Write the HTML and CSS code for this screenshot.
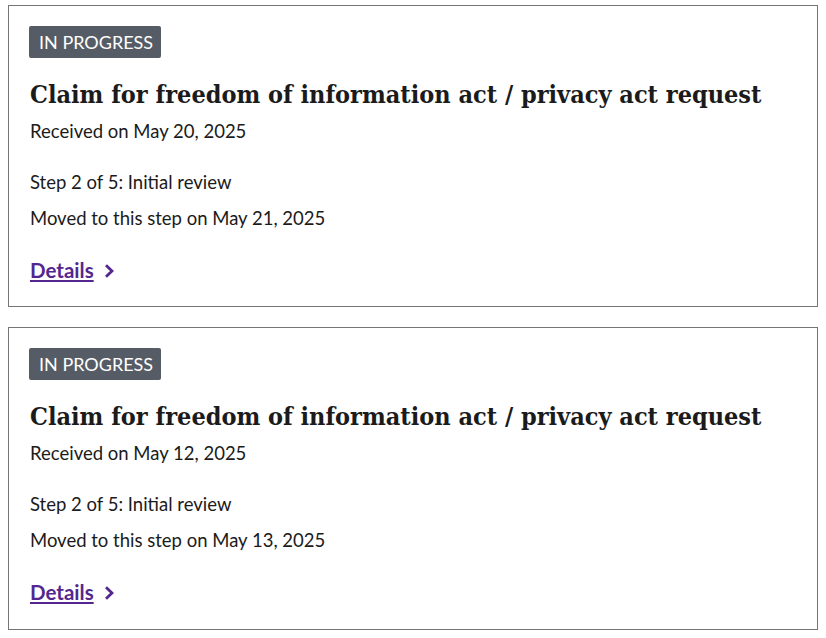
FILE: index.html
```html
<!DOCTYPE html>
<html lang="en">
<head>
<meta charset="utf-8">
<title>Requests</title>
<link rel="stylesheet" href="styles.css">
</head>
<body>
<main class="list">
  <article class="card">
    <span class="badge">IN PROGRESS</span>
    <h3 class="title">Claim for freedom of information act / privacy act request</h3>
    <p class="received">Received on May 20, 2025</p>
    <p class="step">Step 2 of 5: Initial review</p>
    <p class="moved">Moved to this step on May 21, 2025</p>
    <a class="details" href="#">Details<svg class="chev" viewBox="0 0 10 14" width="10" height="14" aria-hidden="true"><path d="M2 1.2 L8 7 L2 12.8" fill="none" stroke="currentColor" stroke-width="2.8"/></svg></a>
  </article>
  <article class="card">
    <span class="badge">IN PROGRESS</span>
    <h3 class="title">Claim for freedom of information act / privacy act request</h3>
    <p class="received">Received on May 12, 2025</p>
    <p class="step">Step 2 of 5: Initial review</p>
    <p class="moved">Moved to this step on May 13, 2025</p>
    <a class="details" href="#">Details<svg class="chev" viewBox="0 0 10 14" width="10" height="14" aria-hidden="true"><path d="M2 1.2 L8 7 L2 12.8" fill="none" stroke="currentColor" stroke-width="2.8"/></svg></a>
  </article>
</main>
</body>
</html>
```

FILE: styles.css
```css
html, body {
  background: #ffffff;
}
body {
  margin: 0;
  padding: 5px 8px;
  font-family: "Lato", "Liberation Sans", sans-serif;
  color: #1b1b1b;
}
.list {
  display: flex;
  flex-direction: column;
  gap: 20px;
}
.card {
  display: flex;
  flex-direction: column;
  align-items: flex-start;
  border: 1px solid #757575;
  padding: 20px 20px 22.4px 20px;
}
.badge {
  display: inline-flex;
  align-items: center;
  height: 32px;
  padding: 0 8px 0 10px;
  background: #565c65;
  color: #ffffff;
  border-radius: 2px;
  font-size: 18px;
  line-height: 32px;
}
.title {
  margin: 21px 0 0 1px;
  font-family: "DejaVu Serif Condensed", "DejaVu Serif", serif;
  font-weight: 700;
  font-size: 25px;
  line-height: 32px;
  color: #1b1b1b;
}
.received, .step, .moved {
  margin: 0 0 0 1px;
  font-size: 18.5px;
  line-height: 27px;
}
.received { margin-top: 7px; }
.step { margin-top: 24px; }
.moved { margin-top: 9px; }
.details {
  margin: 25px 0 0 1px;
  display: inline-flex;
  align-items: center;
  gap: 10px;
  font-size: 20.5px;
  line-height: 27px;
  font-weight: 700;
  color: #54278f;
  text-decoration: underline;
  text-underline-offset: 2px;
}
.chev {
  display: block;
}
```
